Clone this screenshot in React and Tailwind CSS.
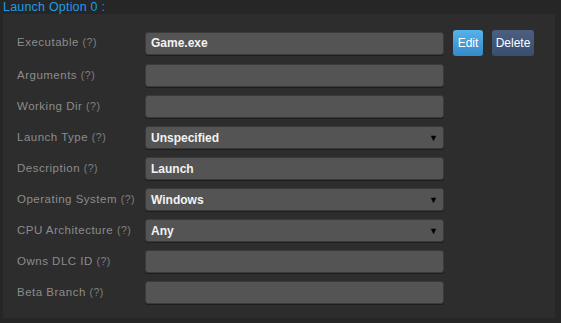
import React from "react";

const rows = [
  { label: "Executable", value: "Game.exe", buttons: true },
  { label: "Arguments", value: "" },
  { label: "Working Dir", value: "" },
  { label: "Launch Type", value: "Unspecified", select: true },
  { label: "Description", value: "Launch" },
  { label: "Operating System", value: "Windows", select: true },
  { label: "CPU Architecture", value: "Any", select: true },
  { label: "Owns DLC ID", value: "" },
  { label: "Beta Branch", value: "" },
];

function Field({ row }) {
  return (
    <div className="relative flex h-[23px] w-[299px] items-center rounded-[3px] border border-[#3a3a3a] bg-[#545454] pl-[5px] text-[12px] font-bold text-[#f2f2f2] shadow-[0_1px_0_#1e1e1e]">
      {row.value}
      {row.select && (
        <span className="absolute right-[5px] top-[5px] text-[9px] text-black">▼</span>
      )}
    </div>
  );
}

export default function App() {
  return (
    <div className="h-[323px] w-[561px] bg-[#262626] font-['Liberation_Sans',sans-serif]">
      <div className="h-[14px] pl-[3px] text-[12.5px] leading-[14px] tracking-[0.2px] text-[#1f9be6]">Launch Option 0 :</div>
      <div className="ml-[3px] h-[304px] w-[552px] bg-[#2d2d2d] pl-[14px] pt-[16px]">
        <div className="flex flex-col gap-[8px]">
          {rows.map((row) => (
            <div key={row.label} className="flex items-center">
              <div className="w-[128px] text-[11.5px] tracking-[0.5px] text-[#8c8c8c]">
                {row.label} <span className="text-[10.5px] text-[#808080]">(?)</span>
              </div>
              <Field row={row} />
              {row.buttons && (
                <div className="ml-[9px] flex gap-[9px]">
                  <button className="h-[26px] w-[30px] rounded-[3px] bg-gradient-to-b from-[#56b3ea] to-[#3489c9] text-[12px] text-white">
                    Edit
                  </button>
                  <button className="h-[26px] w-[42px] rounded-[3px] bg-gradient-to-b from-[#4a5f82] to-[#3a4e6e] text-[12px] text-white">
                    Delete
                  </button>
                </div>
              )}
            </div>
          ))}
        </div>
      </div>
    </div>
  );
}
